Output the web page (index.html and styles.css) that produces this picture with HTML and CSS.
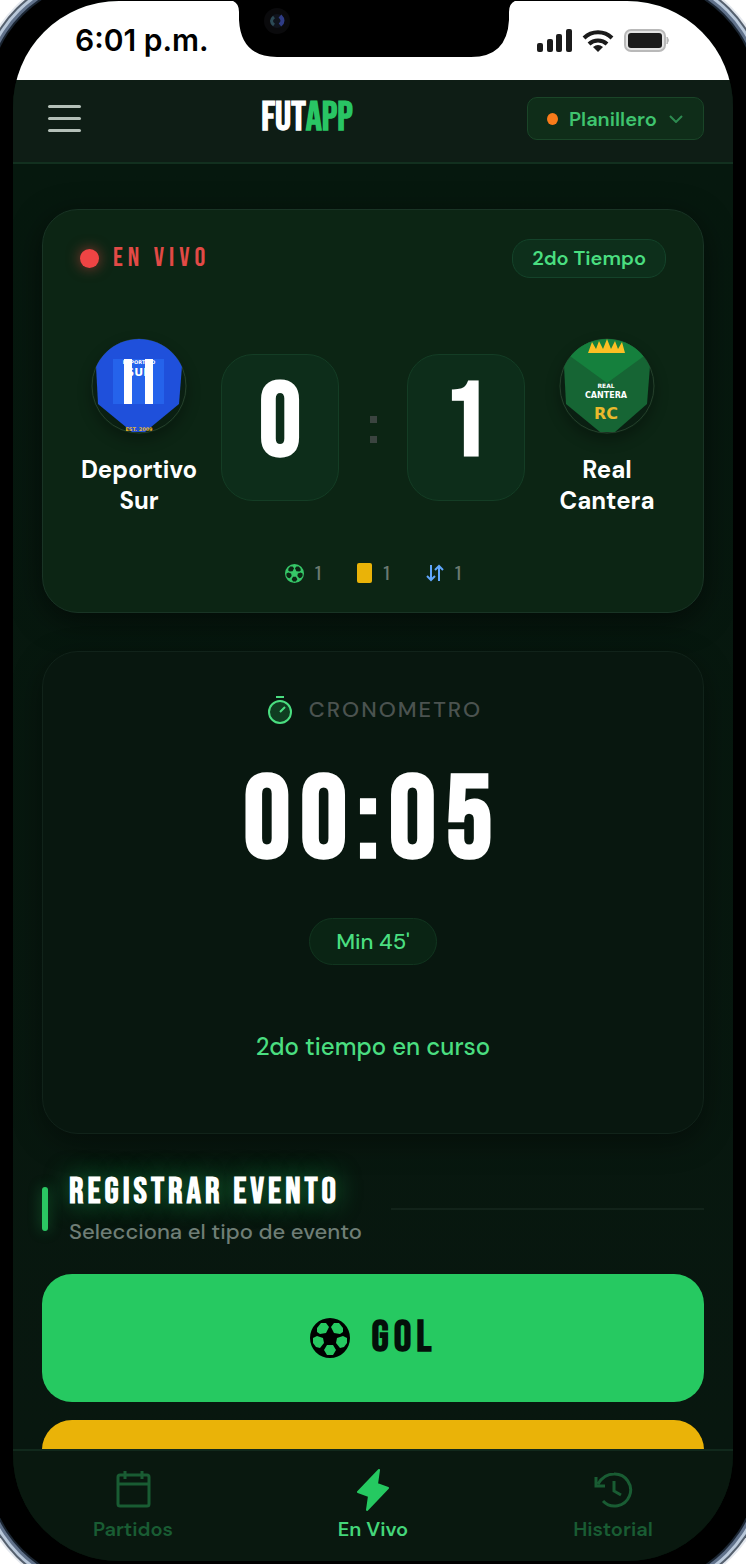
FILE: index.html
```html
<!DOCTYPE html>
<html lang="es">
<head>
<meta charset="utf-8">
<meta name="viewport" content="width=device-width, initial-scale=1">
<title>FutApp - En Vivo</title>
<link rel="stylesheet" href="styles.css">
</head>
<body>

<svg class="defs" aria-hidden="true">
  <symbol id="ball" viewBox="0 0 40 40">
    <path fill-rule="evenodd" d="M20 0a20 20 0 1 0 0 40a20 20 0 1 0 0-40z
      M7 10l4-5 5 0 3 4-3 6-6 1-3-2z
      M33 10l-4-5-5 0-3 4 3 6 6 1 3-2z
      M3 20l4-2 6 2 1 5-4 5-4-1-3-4z
      M37 20l-4-2-6 2-1 5 4 5 4-1 3-4z
      M14 32l3-5h6l3 5-3 5h-6z"/>
  </symbol>
</svg>

<div class="stage">
<div class="phone">
<div class="screen">

  <div class="status">
    <span class="clock">6:01 p.m.</span>
    <svg class="notch" width="290" height="57" viewBox="0 0 290 57" aria-hidden="true">
      <path d="M0 0Q10 1 10 12V20Q12 57 48 57H242Q278 57 280 20V12Q280 1 290 0z"/>
      <circle cx="48" cy="21" r="13" fill="#0a0a0c"/>
      <circle cx="48" cy="21" r="7" fill="#10141d"/>
      <path d="M45 17q-5 4 0 8" fill="none" stroke="#2c4a55" stroke-width="3"/>
      <path d="M51 16q5 5 0 9" fill="none" stroke="#2f3c86" stroke-width="4"/>
    </svg>
    <div class="signals">
      <svg width="36" height="24" viewBox="0 0 36 24" fill="#1b1b1b" aria-hidden="true">
        <rect x="0" y="14" width="6" height="9" rx="2"/>
        <rect x="10" y="10" width="6" height="13" rx="2"/>
        <rect x="19" y="5" width="6" height="18" rx="2"/>
        <rect x="29" y="0" width="6" height="23" rx="2"/>
      </svg>
      <svg width="32" height="24" viewBox="0 0 32 24" fill="none" stroke="#1b1b1b" stroke-width="4" aria-hidden="true">
        <path d="M2 9a20 20 0 0 1 28 0M7 15a13 13 0 0 1 18 0"/>
        <path d="M16 23l-5-5q5-4 10 0z" fill="#1b1b1b" stroke="none"/>
      </svg>
      <svg width="48" height="24" viewBox="0 0 48 24" aria-hidden="true">
        <rect x="2" y="1" width="40" height="21" rx="6" fill="#e4e4e4" stroke="#b9b9b9" stroke-width="2"/>
        <rect x="5" y="4" width="34" height="15" rx="3" fill="#1b1b1b"/>
        <path d="M44 8q3 3 0 7z" fill="#b9b9b9" stroke="#b9b9b9"/>
      </svg>
    </div>
  </div>

  <header class="topbar">
    <button class="menu" type="button" aria-label="Menu"><span></span><span></span><span></span></button>
    <a class="logo" href="#">FUT<b>APP</b></a>
    <label class="role">
      <span class="role-dot"></span>
      <select aria-label="Rol"><option>Planillero</option></select>
      <svg width="14" height="8" viewBox="0 0 14 8" fill="none" stroke="#2d8a50" stroke-width="2" aria-hidden="true"><path d="M1 1l6 6 6-6"/></svg>
    </label>
  </header>

  <main class="content">

    <section class="card match">
      <div class="match-head">
        <span class="live"><i class="live-dot"></i>EN VIVO</span>
        <span class="pill">2do Tiempo</span>
      </div>

      <div class="scoreboard">
        <div class="team">
          <svg class="badge" viewBox="0 0 96 96" aria-hidden="true">
            <clipPath id="round"><circle cx="48" cy="48" r="47"/></clipPath>
            <circle cx="48" cy="48" r="47" fill="#0a1f12" stroke="#26402c"/>
            <g clip-path="url(#round)">
              <path d="M5 28L12 0H84L91 28 88 66 54 94H41L7 66z" fill="#1f50db"/>
              <path d="M22 21h51v45H22z" fill="#2563eb"/>
              <text x="48" y="26" class="badge-xs">DEPORTIVO</text>
              <text x="48" y="38" class="badge-md">SUR</text>
              <path d="M33 21h8v45h-8zM54 21h8v45h-8z" fill="#fff"/>
              <text x="48" y="93" class="badge-xs gold">EST. 2009</text>
            </g>
          </svg>
          <h2>Deportivo Sur</h2>
        </div>
        <div class="score">0</div>
        <div class="colon"><i></i><i></i></div>
        <div class="score">1</div>
        <div class="team">
          <svg class="badge" viewBox="0 0 96 96" aria-hidden="true">
            <circle cx="48" cy="48" r="47" fill="#0a1f12" stroke="#26402c"/>
            <g clip-path="url(#round)">
              <path d="M5 28L12 0H84L91 28 88 66 56 94H41L7 66z" fill="#166534"/>
              <path d="M0 10L48 45 96 10V0H0z" fill="#15803d"/>
              <path d="M29 15l4-11 4 7 3-8 4 8 4-10 4 10 4-8 3 8 4-7 3 11z" fill="#fbbf24"/>
              <text x="47" y="50" class="badge-sm">REAL</text>
              <text x="47" y="60" class="badge-base">CANTERA</text>
              <text x="47" y="81" class="badge-lg gold">RC</text>
            </g>
          </svg>
          <h2>Real Cantera</h2>
        </div>
      </div>

      <ul class="stats">
        <li><svg width="19" height="19" fill="#36c768" aria-hidden="true"><use href="#ball"/></svg>1</li>
        <li><i class="yellow-card"></i>1</li>
        <li>
          <svg width="18" height="18" viewBox="0 0 18 18" fill="none" stroke="#60a5fa" stroke-width="2" aria-hidden="true">
            <path d="M5 1v15M1 12l4 4 4-4M13 17V2M9 6l4-4 4 4"/>
          </svg>1
        </li>
      </ul>
    </section>

    <section class="card timer">
      <h3>
        <svg width="24" height="28" viewBox="0 0 24 28" fill="none" stroke="#4ade80" stroke-width="2" aria-hidden="true">
          <circle cx="12" cy="16" r="11" fill="#0f3d21"/>
          <path d="M8 1h8M12 16l5-5"/>
        </svg>
        CRONOMETRO
      </h3>
      <div class="time">00:05</div>
      <span class="pill minute">Min 45'</span>
      <p>2do tiempo en curso</p>
    </section>

    <div class="section-title">
      <div>
        <h2>REGISTRAR EVENTO</h2>
        <p>Selecciona el tipo de evento</p>
      </div>
    </div>

    <button class="event goal" type="button">
      <svg width="40" height="40" aria-hidden="true"><use href="#ball"/></svg>GOL
    </button>
    <button class="event warning" type="button" aria-label="Tarjeta amarilla"></button>

  </main>

  <nav class="tabs">
    <a href="#">
      <svg width="42" height="42" viewBox="0 0 42 42" fill="none" stroke="currentColor" stroke-width="3" aria-hidden="true">
        <rect x="6" y="6" width="31" height="31" rx="2"/>
        <path d="M5 15h32M13 2v8M30 2v8"/>
      </svg>
      Partidos
    </a>
    <a class="active" href="#">
      <svg width="42" height="42" viewBox="0 0 42 42" fill="#25c961" stroke="#25c961" stroke-width="2" stroke-linejoin="round" aria-hidden="true">
        <path d="M27 1L6 23l11 4-2 14L36 19l-11-4z"/>
      </svg>
      En Vivo
    </a>
    <a href="#">
      <svg width="42" height="42" viewBox="0 0 42 42" fill="none" stroke="currentColor" stroke-width="3" aria-hidden="true">
        <path d="M6 15Q12 5 22 5a16 16 0 1 1-11 27M4 8v9h9M22 12v10l7 4"/>
      </svg>
      Historial
    </a>
  </nav>

</div>
</div>
</div>

</body>
</html>
```

FILE: styles.css
```css
/* FutApp - live match screen */

* {
  box-sizing: border-box;
}

body {
  margin: 0;
  background: #fff;
  color: #fff;
  font-family: "DM Sans", Inter, "Liberation Sans", sans-serif;
}

h2, h3, p, ul {
  margin: 0;
  padding: 0;
}

a {
  color: inherit;
  text-decoration: none;
}

button, select {
  font: inherit;
  color: inherit;
  border: 0;
}

.defs {
  display: none;
}

/* Phone frame */

.stage {
  height: 100vh;
  overflow: hidden;
  display: flex;
}

.phone {
  flex: 1;
  display: flex;
  margin: -20px -12px -21px;
  padding: 21px 25px 24px;
  background: #000;
  border-radius: 120px;
  box-shadow: 0 0 0 2px #1b2633, 0 0 0 5px #60718a, 0 0 0 8px #b9c8da, 0 0 0 10px #55606e, 0 0 0 12px #e4e8ee;
}

.screen {
  flex: 1;
  min-width: 0;
  display: flex;
  flex-direction: column;
  overflow: hidden;
  border-radius: 106px;
  background: #06180e;
}

.status {
  position: relative;
  flex: none;
  height: 79px;
  display: flex;
  justify-content: space-between;
  padding: 0 62px;
  background: #fff;
  color: #000;
}

.clock {
  font: 600 30px/78px Inter, sans-serif;
}

.notch {
  position: absolute;
  top: -1px;
  left: 50%;
  margin-left: -144px;
}

.signals {
  display: flex;
  gap: 9px;
  padding-top: 28px;
}

/* Top bar */

.topbar {
  flex: none;
  height: 84px;
  display: flex;
  align-items: center;
  justify-content: space-between;
  padding: 0 29px 5px 35px;
  background: #0e1d15;
  border-bottom: 2px solid #12301f;
}

.menu {
  display: flex;
  flex-direction: column;
  gap: 9px;
  width: 33px;
  padding: 0;
  background: none;
}

.menu span {
  height: 3px;
  border-radius: 2px;
  background: #b4c0b8;
}

.logo {
  margin: 0 0 2px 6px;
  font: bold 40px/40px "Bebas Neue", "Liberation Sans Narrow", sans-serif;
}

.logo b {
  color: #29c564;
}

.role {
  display: flex;
  align-items: center;
  gap: 11px;
  width: 177px;
  height: 43px;
  padding: 0 20px 0 19px;
  border: 1px solid #1a4528;
  border-radius: 10px;
  background: #0f2d19;
  color: #3fc46f;
  font-size: 20px;
  font-weight: 600;
}

.role-dot {
  width: 11px;
  height: 12px;
  border-radius: 50%;
  background: #f97b1a;
}

.role select {
  flex: 1;
  min-width: 0;
  padding: 0;
  appearance: none;
  background: none;
}

/* Content */

.content {
  flex: 1;
  min-height: 0;
  overflow: hidden;
  padding: 45px 29px 0;
  background: linear-gradient(#06180e, #08170f);
}

.card {
  border: 1px solid #193425;
  border-radius: 36px;
}

.match {
  height: 404px;
  padding: 29px 37px;
  background: #0c2514;
  box-shadow: 0 8px 30px rgba(0, 0, 0, .5);
}

.match-head {
  display: flex;
  align-items: center;
  justify-content: space-between;
}

.live {
  display: flex;
  align-items: center;
  gap: 14px;
  color: #e24a46;
  font: 27px/39px "Bebas Neue", "Liberation Sans Narrow", sans-serif;
  letter-spacing: 5px;
}

.live-dot {
  width: 19px;
  height: 19px;
  border-radius: 50%;
  background: #ef4444;
  box-shadow: 0 0 14px rgba(239, 68, 68, .6);
}

.pill {
  padding: 0 19px;
  border: 1px solid #14432a;
  border-radius: 18px;
  background: #0d2f1b;
  color: #4ade80;
  font-size: 20px;
  font-weight: 600;
  line-height: 37px;
}

.scoreboard {
  display: flex;
  align-items: center;
  justify-content: space-between;
  margin-top: 60px;
}

.team {
  width: 118px;
  text-align: center;
}

.badge {
  display: block;
  width: 96px;
  height: 96px;
  margin: 0 auto 20px;
  border-radius: 50%;
  box-shadow: 0 6px 14px rgba(0, 0, 0, .3);
}

.badge text {
  font-family: "DejaVu Sans", sans-serif;
  font-weight: bold;
  text-anchor: middle;
  fill: #fff;
}

.badge .badge-xs { font-size: 5px; }
.badge .badge-sm { font-size: 6px; }
.badge .badge-base { font-size: 8px; }
.badge .badge-md { font-size: 11px; }
.badge .badge-lg { font-size: 16px; }
.badge .gold { fill: #eab92c; }

.team h2 {
  font-size: 24px;
  font-weight: 700;
  line-height: 31px;
}

.score {
  width: 118px;
  height: 147px;
  border: 1px solid #143d25;
  border-radius: 32px;
  background: #0d2d1a;
  font: bold 104px/138px "Bebas Neue", "Liberation Sans Narrow", sans-serif;
  text-align: center;
}

.colon {
  display: flex;
  flex-direction: column;
  align-items: center;
  gap: 13px;
  width: 22px;
  padding-top: 4px;
}

.colon i {
  width: 7px;
  height: 7px;
  background: #3b4440;
}

.stats {
  display: flex;
  justify-content: center;
  gap: 36px;
  margin-top: 45px;
  color: #6b7a71;
  font-size: 20px;
  font-weight: 500;
  line-height: 24px;
  list-style: none;
}

.stats li {
  display: flex;
  align-items: center;
  gap: 11px;
}

.yellow-card {
  width: 15px;
  height: 20px;
  border-radius: 2px;
  background: #eab308;
}

/* Stopwatch */

.timer {
  display: flex;
  flex-direction: column;
  align-items: center;
  height: 483px;
  margin-top: 38px;
  padding-top: 43px;
  background: #08170f;
  border-color: #11231a;
  box-shadow: 0 8px 30px rgba(0, 0, 0, .4);
}

.timer h3 {
  display: flex;
  align-items: center;
  gap: 17px;
  padding-left: 4px;
  color: #4b5350;
  font-size: 22px;
  font-weight: 500;
  line-height: 30px;
  letter-spacing: 2px;
}

.time {
  margin-top: 36px;
  font: bold 117px/122px "Bebas Neue", "Liberation Sans Narrow", sans-serif;
  letter-spacing: 10px;
}

.minute {
  margin-top: 35px;
  padding: 0 26px;
  border-color: #11351f;
  border-radius: 24px;
  background: #0a2414;
  font-size: 22px;
  font-weight: 500;
  line-height: 45px;
}

.timer p {
  margin-top: 67px;
  color: #4ade80;
  font-size: 24px;
  font-weight: 500;
  line-height: 30px;
}

/* Event buttons */

.section-title {
  display: flex;
  align-items: center;
  gap: 21px;
  margin: 38px 0 24px;
}

.section-title::before {
  content: "";
  width: 6px;
  height: 44px;
  margin-bottom: 4px;
  border-radius: 3px;
  background: #2bc763;
  box-shadow: 0 0 14px rgba(34, 197, 94, .4);
}

.section-title::after {
  content: "";
  flex: 1;
  height: 2px;
  margin: 0 0 4px 8px;
  background: #12231a;
}

.section-title h2 {
  font: bold 36px/42px "Bebas Neue", "Liberation Sans Narrow", sans-serif;
  letter-spacing: 4px;
  text-shadow: 0 0 24px rgba(34, 197, 94, .6);
}

.section-title p {
  color: #6f7e76;
  font-size: 22px;
  font-weight: 500;
  line-height: 36px;
}

.event {
  display: flex;
  align-items: center;
  justify-content: center;
  gap: 22px;
  width: 100%;
  height: 128px;
  margin-bottom: 18px;
  border-radius: 30px;
  color: #04100a;
  font: bold 44px/50px "Bebas Neue", "Liberation Sans Narrow", sans-serif;
  letter-spacing: 5px;
}

.goal { background: #26c961; }
.warning { background: #eab308; }

/* Bottom tabs */

.tabs {
  flex: none;
  display: flex;
  height: 112px;
  padding-top: 18px;
  border-top: 2px solid #11291c;
  background: #09180f;
}

.tabs a {
  flex: 1;
  display: flex;
  flex-direction: column;
  align-items: center;
  gap: 4px;
  color: #195c33;
  font-size: 20px;
  font-weight: 600;
  line-height: 28px;
}

.tabs .active {
  color: #44d67a;
}
```
